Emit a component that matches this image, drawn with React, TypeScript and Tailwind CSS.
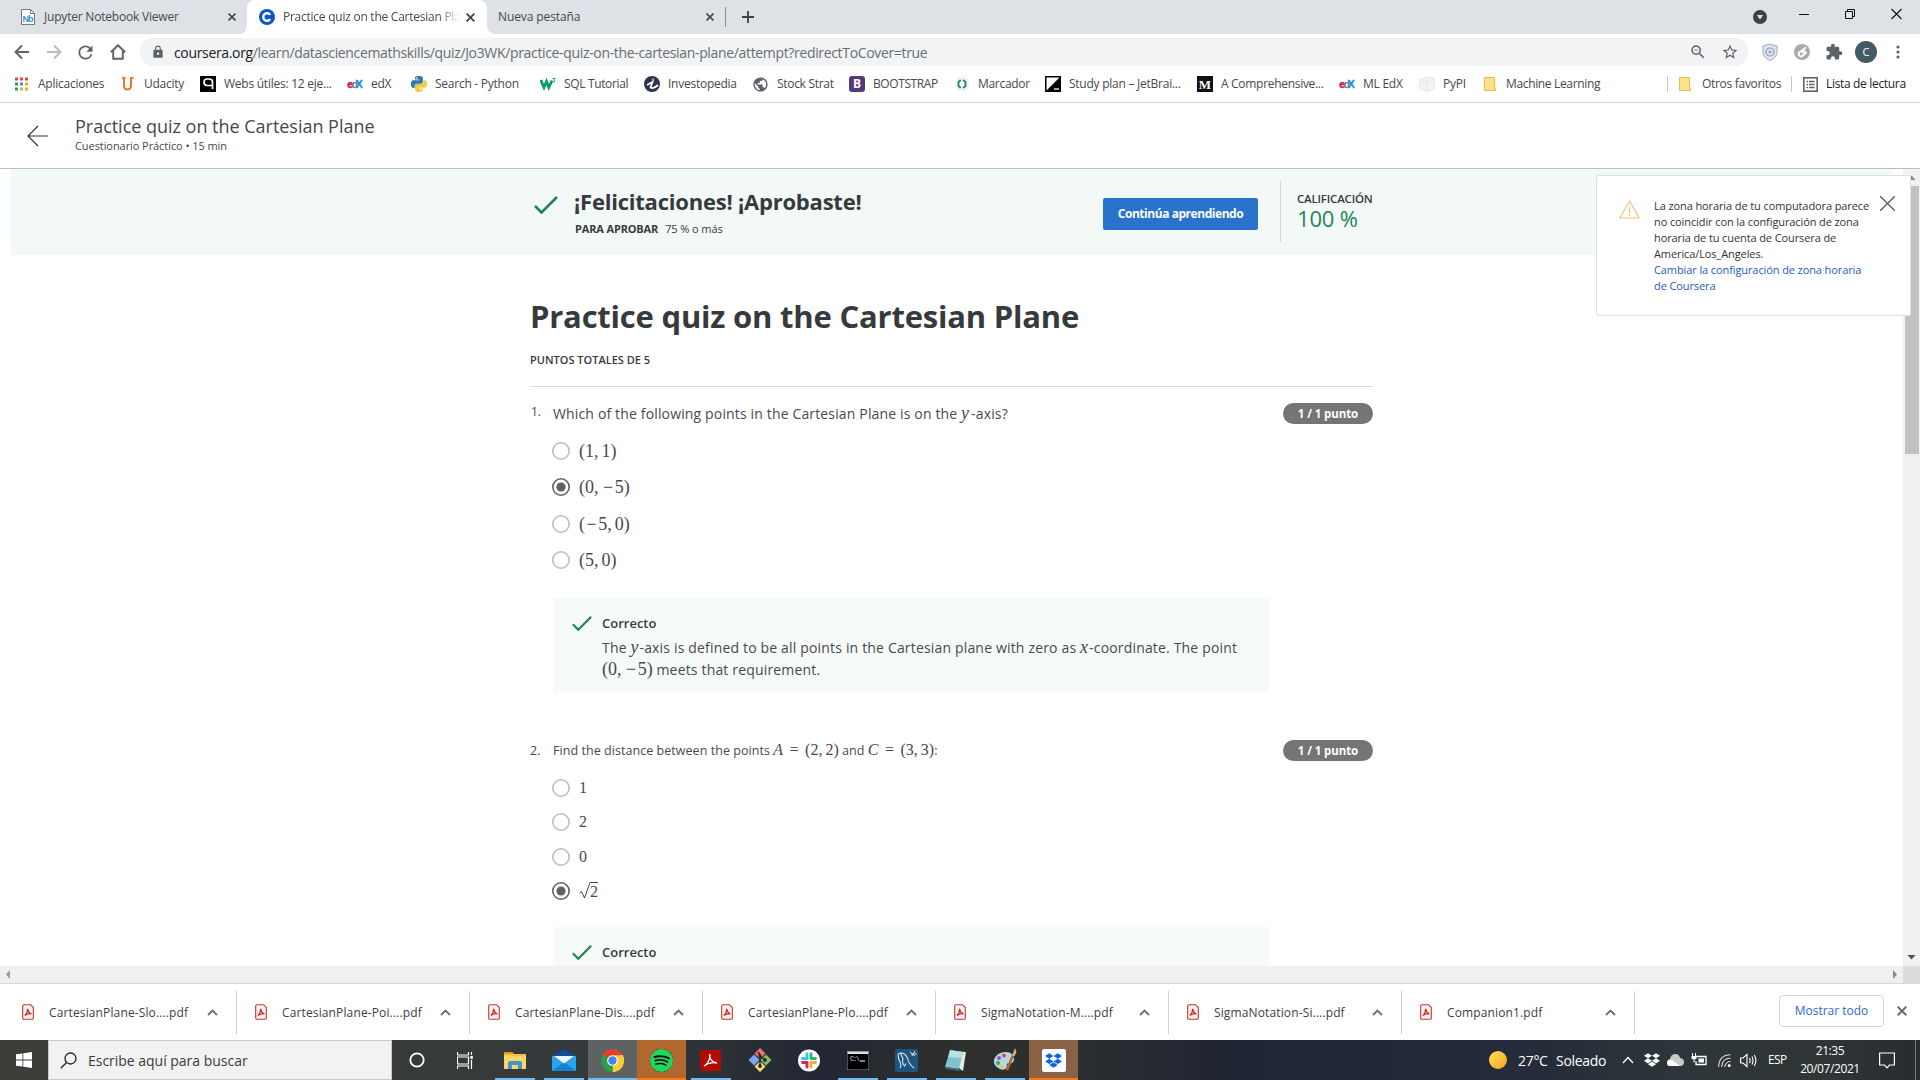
import React from "react";
import { SiPython, SiDropbox, SiSpotify } from "react-icons/si";
import { MdLock, MdExtension, MdStarBorder, MdZoomOut, MdPublic, MdRefresh } from "react-icons/md";

const ui = "font-['Open_Sans','Noto_Sans',sans-serif]";
const serif = "font-['Liberation_Serif',serif]";

/* ---------- browser chrome ---------- */

function Cross({ size = 8, w = 1.6, color = "#45494d" }: { size?: number; w?: number; color?: string }) {
  return (
    <svg width={size} height={size} viewBox="0 0 10 10" className="shrink-0">
      <path d="M0.7 0.7L9.3 9.3M9.3 0.7L0.7 9.3" stroke={color} strokeWidth={w * (10 / size)} fill="none" />
    </svg>
  );
}

function TabBar() {
  return (
    <div className="flex h-[34px] bg-[#dee1e6] text-[12px] text-[#45494d]">
      <div className="flex w-[247px] items-center pl-[21px] pr-[11px]">
        <svg width="14" height="16" viewBox="0 0 14 16">
          <path d="M1 .5h8.500L13.500 4.500v11H.5V.5z" fill="#fff" stroke="#777" />
          <path d="M9.500 .5v4h4" fill="none" stroke="#777" />
          <text x="1.500" y="13" fontSize="9" fontWeight="600" fill="#3c8dc9" fontFamily="Liberation Sans" textLength="11">Nb</text>
        </svg>
        <span className="ml-[9px] flex-1 whitespace-nowrap tracking-[-0.2px]">Jupyter Notebook Viewer</span>
        <Cross />
      </div>
      <div className="relative flex w-[240px] items-center rounded-t-[8px] bg-white pl-[12px] pr-[12px]">
        <svg width="8" height="8" className="absolute bottom-0 -left-2"><path d="M8 0V8H0A8 8 0 0 0 8 0z" fill="#fff" /></svg>
        <svg width="8" height="8" className="absolute bottom-0 -right-2"><path d="M0 0V8H8A8 8 0 0 1 0 0z" fill="#fff" /></svg>
        <svg width="16" height="16" viewBox="0 0 16 16">
          <circle cx="8" cy="8" r="8" fill="#0b56cf" />
          <path d="M11.200 10.100A3.800 3.800 0 1 1 11.200 5.900" fill="none" stroke="#fff" strokeWidth="2.400" />
        </svg>
        <span className="ml-[8px] w-[177px] overflow-hidden whitespace-nowrap tracking-[-0.25px] [mask-image:linear-gradient(90deg,#000_88%,transparent)]">Practice quiz on the Cartesian Plane</span>
        <span className="ml-auto flex"><Cross size={9} w={1.9} /></span>
      </div>
      <div className="flex w-[238px] items-center pl-[11px] pr-[11px]">
        <span className="flex-1 tracking-[-0.1px]">Nueva pestaña</span>
        <Cross />
      </div>
      <div className="flex items-center">
        <div className="h-[20px] w-px bg-[#8a8d91]" />
        <svg className="ml-[16px]" width="12" height="12"><path d="M6 0V12M0 6H12" stroke="#3c4043" strokeWidth="1.8" /></svg>
      </div>
      <div className="ml-auto flex pt-[6px] pr-[18px]">
        <svg width="14" height="14" className="mt-[4px] mr-[32px]" viewBox="0 0 14 14"><circle cx="7" cy="7" r="7" fill="#3c4043" /><path d="M3.800 5h6.400L7 9.400z" fill="#dee1e6" /></svg>
        <svg width="10" height="16" className="mr-[36px]"><path d="M0 8.500H10" stroke="#111" /></svg>
        <svg width="10" height="16" className="mr-[36px]"><path d="M.5 5.500h7v7h-7zM2.500 5.500v-2h7v7h-2" fill="none" stroke="#111" /></svg>
        <svg width="11" height="16"><path d="M.5 3L10.500 13M10.500 3L.5 13" stroke="#111" strokeWidth="1.1" /></svg>
      </div>
    </div>
  );
}

function Toolbar() {
  return (
    <div className="flex h-[36px] items-center bg-white pl-[14px] text-[#5f6368]">
      <svg width="16" height="16" viewBox="0 0 16 16"><path d="M15 8H2M8 1.500L1.500 8L8 14.500" fill="none" stroke="#5f6368" strokeWidth="1.900" /></svg>
      <svg className="ml-[16px]" width="16" height="16" viewBox="0 0 16 16"><path d="M1 8H14M8 1.500L14.500 8L8 14.500" fill="none" stroke="#babcbe" strokeWidth="1.900" /></svg>
      <MdRefresh className="ml-[13px]" size={21} color="#5f6368" />
      <svg className="ml-[14px]" width="16" height="16" viewBox="0 0 16 16"><path d="M.8 8.200L8 1.200L15.200 8.200M3.200 6.500V14.800H12.800V6.500" fill="none" stroke="#5f6368" strokeWidth="1.900" /></svg>
      <div className="ml-[14px] flex h-[28px] w-[1608px] items-center rounded-full bg-[#f1f3f4] pl-[11px] pr-[9px]">
        <MdLock size={14} color="#5f6368" />
        <span className="ml-[9px] flex-1 text-[14px] tracking-[-0.34px] text-[#6a6e72]"><span className="text-[#202124]">coursera.org</span>/learn/datasciencemathskills/quiz/Jo3WK/practice-quiz-on-the-cartesian-plane/attempt?redirectToCover=true</span>
        <MdZoomOut size={18} color="#5f6368" />
        <MdStarBorder className="ml-[14px]" size={18} color="#5f6368" />
      </div>
      <svg className="ml-[14px]" width="16" height="18" viewBox="0 0 16 18"><path d="M8 1L15 3V9C15 13 12 16 8 17.500C4 16 1 13 1 9V3z" fill="#dfe3ec" stroke="#a3abba" /><circle cx="8" cy="9" r="4" fill="none" stroke="#8f9fc2" strokeWidth="1.200" /><circle cx="8" cy="9" r="1.800" fill="#a9b6d2" /></svg>
      <svg className="ml-[16px]" width="16" height="16" viewBox="0 0 16 16"><circle cx="8" cy="8" r="8" fill="#a9a9a9" /><path d="M12 3.500L5.500 8.200A2.300 2.300 0 0 0 8.500 11.800L12 8.800L10 6.800L8 9" fill="none" stroke="#fff" strokeWidth="1.900" /></svg>
      <MdExtension className="ml-[15px]" size={18} color="#5f6368" />
      <span className="ml-[12px] flex h-[22px] w-[22px] items-center justify-center rounded-full bg-[#455a64] text-[11px] text-white">C</span>
      <svg className="ml-[19px]" width="4" height="16"><circle cx="2" cy="3" r="1.600" fill="#5f6368" /><circle cx="2" cy="8" r="1.600" fill="#5f6368" /><circle cx="2" cy="13" r="1.600" fill="#5f6368" /></svg>
    </div>
  );
}

const Folder = () => (
  <svg width="16" height="16" viewBox="0 0 16 16"><path d="M2.500 1.500h10v9.500l1 1v2.500h-11z" fill="#fde28a" stroke="#e3be4e" /></svg>
);
const Edx = () => (
  <svg width="16" height="16" viewBox="0 0 16 16">
    <text x="0" y="12" fontSize="11" fontWeight="700" fill="#b2246b" stroke="#b2246b" strokeWidth=".4" fontFamily="Liberation Sans">e</text>
    <text x="4.500" y="12" fontSize="11" fontWeight="700" fill="#7d6c80" fontFamily="Liberation Sans">d</text>
    <text x="8.500" y="12" fontSize="11" fontWeight="700" fill="#1f92dc" stroke="#1f92dc" strokeWidth=".4" fontFamily="Liberation Sans">X</text>
  </svg>
);

const bookmarks: { label: string; w: string; t: string; icon: React.ReactNode }[] = [
  {
    label: "Aplicaciones", w: "w-[106px]", t: "tracking-[-0.25px]",
    icon: (
      <svg width="16" height="16" viewBox="0 0 16 16">
        {["#d94c40", "#d94c40", "#d94c40", "#2e9b5b", "#4285d6", "#e8ab2e", "#2e9b5b", "#e8ab2e", "#e8ab2e"].map((c, i) => (
          <rect key={i} x={1 + (i % 3) * 5} y={1.5 + Math.floor(i / 3) * 5} width="3" height="3" fill={c} />
        ))}
      </svg>
    ),
  },
  { label: "Udacity", w: "w-[80px]", t: "tracking-[-0.25px]", icon: <svg width="16" height="16" viewBox="0 0 16 16"><path d="M2 2H5.500M4 2V9.500Q4 13.500 7.500 13.500Q11 13.500 11 9.500V2H13.500" fill="none" stroke="#e47a2e" strokeWidth="2" /></svg> },
  { label: "Webs útiles: 12 eje...", w: "w-[147px]", t: "tracking-[-0.25px]", icon: <svg width="16" height="16" viewBox="0 0 16 16"><rect width="16" height="16" fill="#000" /><path d="M12.500 13V6Q12.500 3 9 3H7Q4 3 4 6Q4 9.500 7 9.500H12.500" fill="none" stroke="#fff" strokeWidth="1.700" /></svg> },
  { label: "edX", w: "w-[64px]", t: "tracking-[-0.25px]", icon: <Edx /> },
  {
    label: "Search - Python", w: "w-[129px]", t: "tracking-[-0.25px]",
    icon: (
      <span className="relative block h-4 w-4">
        <SiPython size={16} color="#3a74a6" className="absolute [clip-path:polygon(0_0,76%_0,76%_50%,34%_56%,26%_80%,0_80%)]" />
        <SiPython size={16} color="#f8cd3c" className="absolute [clip-path:polygon(78%_20%,100%_20%,100%_100%,26%_100%,26%_60%,36%_54%,76%_48%)]" />
      </span>
    ),
  },
  { label: "SQL Tutorial", w: "w-[104px]", t: "tracking-[-0.35px]", icon: <svg width="16" height="16" viewBox="0 0 16 16"><path d="M.8 4L4 11.500L6.500 5.500L8.800 11.500L12 4.500" fill="none" stroke="#0d9b63" strokeWidth="2.800" /><path d="M12.500 2.500h2.500l-1.300 1.700q1.500 .2 1 1.600q-.9 .9-2.200 .1" fill="none" stroke="#0d9b63" strokeWidth=".9" /></svg> },
  { label: "Investopedia", w: "w-[108px]", t: "tracking-[-0.25px]", icon: <svg width="16" height="16" viewBox="0 0 16 16"><circle cx="8" cy="8" r="8" fill="#2b3150" /><circle cx="9" cy="3.500" r="1.400" fill="#e2704f" /><path d="M3 9L8.500 6L6.500 11.500Q9.500 13.500 14 9" fill="none" stroke="#fff" strokeWidth="1.900" /></svg> },
  { label: "Stock Strat", w: "w-[97px]", t: "tracking-[-0.3px]", icon: <MdPublic size={17} color="#5f6368" /> },
  { label: "BOOTSTRAP", w: "w-[105px]", t: "tracking-[-0.4px]", icon: <span className="flex h-4 w-4 items-center justify-center rounded-[3px] bg-[#533b78] text-[12px] font-bold leading-none text-white">B</span> },
  { label: "Marcador", w: "w-[91px]", t: "tracking-[-0.3px]", icon: <svg width="16" height="16" viewBox="0 0 16 16"><circle cx="8" cy="8" r="7.500" fill="#f1f4f4" /><path d="M6.800 4L4.500 6V10L6.800 12M9.200 4L11.500 6V10L9.200 12" fill="none" stroke="#33807f" strokeWidth="1.900" /></svg> },
  { label: "Study plan – JetBrai...", w: "w-[152px]", t: "tracking-[-0.25px]", icon: <svg width="16" height="16" viewBox="0 0 16 16"><rect x=".75" y=".75" width="14.500" height="14.500" fill="#fff" stroke="#000" strokeWidth="1.500" /><path d="M16 0V16H0z" fill="#000" /><path d="M9 13H14" stroke="#fff" strokeWidth="1.300" /></svg> },
  { label: "A Comprehensive...", w: "w-[142px]", t: "tracking-[-0.3px]", icon: <span className="flex h-4 w-4 items-center justify-center bg-[#111] font-['Liberation_Serif',serif] text-[13px] font-bold leading-none text-white">M</span> },
  { label: "ML EdX", w: "w-[80px]", t: "tracking-[-0.25px]", icon: <Edx /> },
  { label: "PyPI", w: "w-[63px]", t: "tracking-[-0.25px]", icon: <svg width="16" height="16" viewBox="0 0 16 16"><path d="M.5 3.500L8 .8L15.500 3V13L8 15.500L.5 12.500z" fill="#f3f3f1" stroke="#e2e2e0" strokeWidth=".8" /><path d="M.5 3.500L8 5.800L15.500 3M8 5.800V15.500" fill="none" stroke="#e0e0de" strokeWidth=".8" /></svg> },
  { label: "Machine Learning", w: "w-[185px]", t: "tracking-[-0.35px]", icon: <Folder /> },
];

function BookmarkBar() {
  return (
    <div className="flex h-[33px] items-center border-b border-[#d3d5d8] bg-white pb-[4px] pl-[14px] text-[12px] text-[#45494d]">
      {bookmarks.map((b) => (
        <div key={b.label} className={"flex shrink-0 items-center gap-[8px] " + b.w}>
          {b.icon}
          <span className={"whitespace-nowrap " + b.t}>{b.label}</span>
        </div>
      ))}
      <div className="h-[16px] w-px bg-[#c4c7ca]" />
      <div className="ml-[9px] flex w-[114px] items-center gap-[9px]"><Folder /><span className="whitespace-nowrap tracking-[-0.3px]">Otros favoritos</span></div>
      <div className="h-[16px] w-px bg-[#c4c7ca]" />
      <svg className="ml-[11px]" width="15" height="15" viewBox="0 0 15 15"><rect x=".8" y=".8" width="13.400" height="13.400" fill="none" stroke="#5f6368" strokeWidth="1.600" /><path d="M3.500 4.500h1.500M3.500 7.500h1.500M3.500 10.500h1.500M6 4.500h5.500M6 7.500h5.500M6 10.500h5.500" stroke="#5f6368" strokeWidth="1.400" /></svg>
      <span className="ml-[8px] whitespace-nowrap tracking-[-0.33px] text-[#202124]">Lista de lectura</span>
    </div>
  );
}

/* ---------- course page ---------- */

function PageHeader() {
  return (
    <header className="flex h-[66px] items-start border-b border-[#bcbfbf] bg-white pl-[27px] text-[#45484a]">
      <svg className="mt-[22px]" width="22" height="22" viewBox="0 0 22 22"><path d="M21 11H1M11 1L1 11L11 21" fill="none" stroke="#333" strokeWidth="1.200" /></svg>
      <div className="ml-[26px] mt-[10px]">
        <div className="text-[18px] leading-[26px] tracking-[-0.02px]">Practice quiz on the Cartesian Plane</div>
        <div className="text-[11px] leading-[13px] tracking-[-0.07px]">Cuestionario Práctico • 15 min</div>
      </div>
    </header>
  );
}

function Check({ w, h, className = "" }: { w: number; h: number; className?: string }) {
  return (
    <svg width={w} height={h} viewBox="0 0 24 18" preserveAspectRatio="none" className={"shrink-0 " + className}>
      <path d="M1 10L7.500 16.500L23 1" fill="none" stroke="#1f8354" strokeWidth="2.600" />
    </svg>
  );
}

function ResultBanner() {
  return (
    <div className="ml-[11px] flex h-[86px] w-[1881px] bg-[#f3f9f7] pl-[523px]">
      <Check w={24} h={18} className="mt-[27px]" />
      <div className="ml-[16px] w-[529px] pt-[16px] text-[#373a3c]">
        <div className="text-[22px] font-bold leading-[32px] tracking-[-0.22px]">¡Felicitaciones! ¡Aprobaste!</div>
        <div className="ml-[1px] mt-[4px] flex gap-[7px] text-[11px] leading-[16px]"><span className="font-bold tracking-[-0.15px]">PARA APROBAR</span><span className="tracking-[-0.1px]">75 % o más</span></div>
      </div>
      <div className="mt-[29px] flex h-[32px] w-[155px] items-center justify-center rounded-[2px] bg-[#2a73cc] text-[12px] font-bold tracking-[-0.45px] text-white">Continúa aprendiendo</div>
      <div className="ml-[22px] mt-[12px] h-[61px] w-px bg-[#d5dad8]" />
      <div className="ml-[16px] mt-[22px]">
        <div className="text-[11.5px] font-semibold leading-[16px] tracking-[-0.2px] text-[#373a3c]">CALIFICACIÓN</div>
        <div className="mt-[-1px] text-[22px] leading-[24px] tracking-[-0.2px] text-[#25845a]">100 %</div>
      </div>
    </div>
  );
}

function M({ children, i = false, s = "text-[18px]" }: { children: React.ReactNode; i?: boolean; s?: string }) {
  return <span className={serif + " leading-none tracking-normal text-[#484848] " + s + (i ? " italic" : "")}>{children}</span>;
}

const Minus = () => <span className="mx-[1.5px]">−</span>;

function Radio({ on }: { on?: boolean }) {
  return (
    <svg width="18" height="18" viewBox="0 0 18 18" className="shrink-0">
      <circle cx="9" cy="9" r="8.200" fill="#fff" stroke={on ? "#616161" : "#bdbdbd"} strokeWidth="1.600" />
      {on && <circle cx="9" cy="9" r="4.600" fill="#616161" />}
    </svg>
  );
}

function Option({ on, h, children }: { on?: boolean; h: string; children: React.ReactNode }) {
  return (
    <div className={"flex items-center gap-[9px] text-[#444] " + h}>
      <Radio on={on} />
      {children}
    </div>
  );
}

function Badge() {
  return <div className="flex h-[21px] w-[90px] shrink-0 items-center justify-center rounded-full bg-[#757575] text-[11.5px] font-bold tracking-[-0.1px] text-white">1 / 1 punto</div>;
}

function Quiz() {
  return (
    <div className="ml-[530px] w-[843px] text-[#4a4a4a]">
      <h1 className="mt-[39px] text-[31px] font-bold leading-[44px] tracking-[-0.21px] text-[#373a3c]">Practice quiz on the Cartesian Plane</h1>
      <div className="mt-[14px] text-[11px] font-semibold leading-[16px] text-[#373a3c]">PUNTOS TOTALES DE 5</div>
      <div className="mt-[18px] h-px bg-[#d9dada]" />

      <div className="mt-[16px] flex h-[21px]">
        <span className="w-[23px] pl-px text-[12px] leading-[18px]">1.</span>
        <span className="flex-1 text-[14px] leading-[22px] tracking-[0.15px]">Which of the following points in the Cartesian Plane is on the <span className="mr-[2px]"><M i s="text-[18px]">y</M></span>-axis?</span>
        <Badge />
      </div>
      <div className="ml-[22px] mt-[9px]">
        <Option h="h-[36.3px]"><M>(1,<span className="ml-[3px]">1)</span></M></Option>
        <Option h="h-[36.3px]" on><M>(0,<span className="ml-[3px]"><Minus />5)</span></M></Option>
        <Option h="h-[36.4px]"><M>(<Minus />5,<span className="ml-[3px]">0)</span></M></Option>
        <Option h="h-[36px]"><M>(5,<span className="ml-[3px]">0)</span></M></Option>
      </div>
      <div className="ml-[23px] mt-[20px] h-[94px] w-[716px] bg-[#f6faf9] pl-[19px] pt-[16px]">
        <div className="flex h-[19px] items-center gap-[10px]"><Check w={20} h={15} /><span className="text-[13px] font-semibold text-[#373a3c]">Correcto</span></div>
        <div className="ml-[30px] mt-[4px] text-[14px] leading-[22px] tracking-[0.17px]">
          <div className="h-[22px] whitespace-nowrap">The <span className="mr-px"><M i s="text-[18px]">y</M></span>-axis is defined to be all points in the Cartesian plane with zero as <span className="mr-px"><M i s="text-[18px]">x</M></span>-coordinate. The point</div>
          <div className="h-[22px] whitespace-nowrap"><M>(0,<span className="ml-[3px]"><Minus />5)</span></M> meets that requirement.</div>
        </div>
      </div>

      <div className="mt-[48px] flex h-[21px]">
        <span className="w-[23px] text-[12.5px] leading-[21px]">2.</span>
        <span className="flex-1 whitespace-nowrap text-[12.5px] leading-[22px] tracking-[0.05px]">Find the distance between the points <M i s="text-[16px]">A</M><M s="text-[16px]"><span className="mx-[6.5px]">=</span>(2,<span className="ml-[3px]">2)</span></M> and <M i s="text-[16px]">C</M><M s="text-[16px]"><span className="mx-[6.5px]">=</span>(3,<span className="ml-[3px]">3)</span></M>:</span>
        <Badge />
      </div>
      <div className="ml-[22px] mt-[10px]">
        <Option h="h-[34.3px]"><M s="text-[16px]">1</M></Option>
        <Option h="h-[34.3px]"><M s="text-[16px]">2</M></Option>
        <Option h="h-[34.3px]"><M s="text-[16px]">0</M></Option>
        <Option h="h-[34.1px]" on>
          <span className="flex items-start">
            <svg width="11" height="17" viewBox="0 0 11 17"><path d="M.5 11L2.500 9.500L5.500 16L11 .5" fill="none" stroke="#444" /></svg>
            <span className="flex border-t border-[#444] pt-[1px]"><M s="text-[16px]">2</M></span>
          </span>
        </Option>
      </div>
      <div className="ml-[23px] mt-[19px] h-[94px] w-[716px] bg-[#f6faf9] pl-[19px] pt-[16px]">
        <div className="flex h-[19px] items-center gap-[10px]"><Check w={20} h={15} /><span className="text-[13px] font-semibold text-[#373a3c]">Correcto</span></div>
      </div>
    </div>
  );
}

function Notice() {
  return (
    <div className="absolute left-[1596px] top-[6px] flex h-[141px] w-[315px] rounded-[2px] border border-[#dfe1e1] bg-white">
      <svg className="ml-[22px] mt-[24px]" width="21" height="19" viewBox="0 0 21 19"><path d="M10.500 1L20.200 18H.8z" fill="none" stroke="#f0c070" strokeWidth="1.100" /><path d="M10.500 7V13M10.500 14.500V16" stroke="#f0c070" strokeWidth="1.200" /></svg>
      <div className="ml-[14px] mt-[22px] whitespace-nowrap text-[11px] leading-[16px] tracking-[-0.1px] text-[#333]">
        La zona horaria de tu computadora parece<br />no coincidir con la configuración de zona<br />horaria de tu cuenta de Coursera de<br />America/Los_Angeles.<br />
        <span className="text-[#1f5bc0]">Cambiar la configuración de zona horaria<br />de Coursera</span>
      </div>
      <div className="absolute left-[282px] top-[19px]"><Cross size={17} w={1.3} color="#555" /></div>
    </div>
  );
}

function Viewport() {
  return (
    <div className="flex h-[797px]">
      <main className="relative h-full w-[1903px] overflow-hidden bg-white">
        <ResultBanner />
        <Quiz />
      </main>
      <div className="flex h-full w-[17px] flex-col items-center bg-[#f1f1f1]">
        <svg width="17" height="17"><path d="M4.500 11L8.500 6.500L12.500 11z" fill="#8a8a8a" /></svg>
        <div className="h-[268px] w-[14px] bg-[#c1c1c1]" />
        <svg className="mt-auto" width="17" height="17"><path d="M4.500 6L8.500 10.500L12.500 6z" fill="#505050" /></svg>
      </div>
    </div>
  );
}

/* ---------- downloads shelf ---------- */

const files = ["CartesianPlane-Slo....pdf", "CartesianPlane-Poi....pdf", "CartesianPlane-Dis....pdf", "CartesianPlane-Plo....pdf", "SigmaNotation-M....pdf", "SigmaNotation-Si....pdf", "Companion1.pdf"];

function Downloads() {
  return (
    <div className="flex h-[57px] items-center border-t border-[#d6d8da] bg-white text-[12px] text-[#3c4043]">
      {files.map((f, i) => (
        <div key={f} className={"flex h-[43px] items-center border-r border-[#cdd0d3] pr-[18px] " + (i === 0 ? "w-[237px] pl-[22px]" : "w-[233px] pl-[18px]")}>
          <svg width="12" height="16" viewBox="0 0 12 16"><path d="M.7 2Q.7 .7 2 .7H8.500L11.300 3.500V14Q11.300 15.300 10 15.300H2Q.7 15.300 .7 14z" fill="#fdf3f2" stroke="#c4352c" strokeWidth="1.100" /><path d="M2.800 11.500Q5.500 9.500 5.700 4.800Q6.500 9 9.500 9.800Q6 8.800 2.800 11.500z" fill="none" stroke="#c8281e" strokeWidth="1.200" /></svg>
          <span className="ml-[15px] mt-[2px] flex-1 whitespace-nowrap tracking-[0.13px]">{f}</span>
          <svg width="11" height="7"><path d="M1 6L5.500 1.500L10 6" fill="none" stroke="#6b6f73" strokeWidth="1.800" /></svg>
        </div>
      ))}
      <div className="ml-[144px] mt-[-2px] flex h-[32px] w-[105px] items-center justify-center rounded-[4px] border border-[#d5d8dc] text-[12px] font-medium text-[#3268c8]">Mostrar todo</div>
      <div className="ml-[13px] mt-[-2px] flex"><Cross size={10} w={2} color="#6b6f73" /></div>
    </div>
  );
}

/* ---------- Windows taskbar ---------- */

function TaskCell({ children, bg = "", line = "" }: { children: React.ReactNode; bg?: string; line?: string }) {
  return (
    <div className={"relative flex h-[40px] w-[49px] items-center justify-center " + bg}>
      {children}
      {line && <div className={"absolute bottom-0 h-[2px] " + line} />}
    </div>
  );
}

const run = "w-[40px] bg-[#76b9ed]";

function Taskbar() {
  return (
    <div className="flex h-[40px] bg-[linear-gradient(90deg,#3f3d38_0%,#383a3a_20%,#33393b_31%,#2c3236_37%,#222634_43%,#2e302c_50%,#2b2f30_56%,#202532_63%,#22283a_76%,#2d3639_88%,#303536_95%,#262c30_100%)] text-white">
      <div className="flex w-[48px] items-center justify-center">
        <svg width="16" height="16" viewBox="0 0 16 16" fill="#fff"><path d="M0 2.300L6.500 1.400V7.600H0zM7.300 1.300L16 0V7.600H7.300zM0 8.400H6.500V14.600L0 13.700zM7.300 8.400H16V16L7.300 14.700z" /></svg>
      </div>
      <div className="flex w-[344px] items-center border border-[#c9c9c9] bg-[#f2f2f2] pl-[11px]">
        <svg width="17" height="17" viewBox="0 0 17 17"><circle cx="10.500" cy="6.500" r="5.500" fill="none" stroke="#222" strokeWidth="1.300" /><path d="M6.500 10.500L.8 16.200" stroke="#222" strokeWidth="1.300" /></svg>
        <span className="ml-[11px] text-[14px] text-[#3b3b3b] tracking-[-0.02px]">Escribe aquí para buscar</span>
      </div>
      <TaskCell><svg width="16" height="16"><circle cx="8" cy="8" r="6.700" fill="none" stroke="#fff" strokeWidth="1.800" /></svg></TaskCell>
      <TaskCell>
        <svg width="17" height="17" viewBox="0 0 17 17"><path d="M.5 0V3H11.500V0M.5 17V14H11.500V17M.5 5H11.500V12H.5zM14.500 0V3M14.500 8V17" fill="none" stroke="#fff" strokeWidth="1.200" /><rect x="13.300" y="4" width="2.500" height="3" fill="#fff" /></svg>
      </TaskCell>
      <TaskCell line={run}>
        <svg width="22" height="19" viewBox="0 0 22 19"><path d="M0 1H8L10 3H22V18H0z" fill="#f6c243" /><path d="M0 1H8L9.500 3H0z" fill="#d99a1e" /><path d="M0 5H22V18H0z" fill="#fbd566" /><path d="M4 18V12Q4 10 6 10H16Q18 10 18 12V18H14V14H8V18z" fill="#4296d2" /></svg>
      </TaskCell>
      <TaskCell line={run}>
        <svg width="24" height="22" viewBox="0 0 24 22"><path d="M0 7L12 0L24 7V9H0z" fill="#0f4f94" /><path d="M0 7H24V22H0z" fill="#2aa5ea" /><path d="M0 22L12 13L24 22z" fill="#1484d2" /><path d="M2 7H22L12 14.500z" fill="#eef6fc" /></svg>
      </TaskCell>
      <TaskCell bg="bg-[#5d6263]" line="w-full bg-[#76b9ed]">
        <svg width="23" height="23" viewBox="0 0 24 24">
          <path d="M12 12L1.610 6A12 12 0 0 1 22.390 6z" fill="#e3402f" />
          <path d="M12 12L22.390 6A12 12 0 0 1 12 24z" fill="#fbcc34" />
          <path d="M12 12V24A12 12 0 0 1 1.610 6z" fill="#2c9f4b" />
          <path d="M12 6.500H22.700A12 12 0 0 1 12 24L17 14z" fill="#fbcc34" />
          <circle cx="12" cy="12" r="5.600" fill="#fff" /><circle cx="12" cy="12" r="4.400" fill="#4385f0" />
        </svg>
      </TaskCell>
      <TaskCell bg="bg-[#b0682e]" line="w-full bg-[#f57a1c]"><span className="flex rounded-full bg-[#101010]"><SiSpotify size={23} color="#1fd65f" /></span></TaskCell>
      <TaskCell line={run}>
        <span className="flex h-[21px] w-[21px] items-center justify-center rounded-[3px] bg-[#b30b00]">
          <svg width="15" height="15" viewBox="0 0 15 15"><path d="M1 13Q6.500 10 7 2Q7 1 6.500 2Q7 9 14 10Q7 8.500 1 13z" fill="none" stroke="#fff" strokeWidth="1.300" /></svg>
        </span>
      </TaskCell>
      <TaskCell>
        <svg width="24" height="24" viewBox="0 0 24 24"><path d="M12 0L17.500 5.500L12 11L6.500 5.500z" fill="#f0706a" /><path d="M6 6.500L11.500 12L6 17.500L.5 12z" fill="#7aa7f5" /><path d="M18 6.500L23.500 12L18 17.500L12.500 12z" fill="#83c35d" /><path d="M12 13L17.500 18.500L12 24L6.500 18.500z" fill="#f8dc72" /><path d="M10 4L12 7V18M12 8L17 12" fill="none" stroke="#2b2b2b" strokeWidth="1.500" /><circle cx="12" cy="18" r="1.900" fill="#2b2b2b" /><circle cx="12" cy="8" r="1.700" fill="#2b2b2b" /><circle cx="17" cy="12" r="1.900" fill="#2b2b2b" /></svg>
      </TaskCell>
      <TaskCell>
        <svg width="22" height="23" viewBox="0 0 22 22"><circle cx="11" cy="11" r="11" fill="#fff" /><g strokeWidth="2.900" strokeLinecap="round"><path d="M9 4.500V9" stroke="#36c5f0" /><path d="M4.500 9H9" stroke="#36c5f0" /><path d="M13 4.500V9M13 9H17.500" stroke="#2eb67d" /><path d="M13 13H17.500M13 13V17.500" stroke="#ecb22e" /><path d="M4.500 13H9M9 13V17.500" stroke="#e01e5a" /></g></svg>
      </TaskCell>
      <TaskCell line={run}>
        <svg width="22" height="19" viewBox="0 0 22 19"><rect width="22" height="19" fill="#000" stroke="#999" /><rect x=".5" y=".5" width="21" height="2.500" fill="#ddd" /><text x="3" y="10" fontSize="7" fill="#ddd" fontFamily="Liberation Mono" textLength="10">C:\</text><path d="M13 10H18" stroke="#fff" /></svg>
      </TaskCell>
      <TaskCell line={run}>
        <svg width="23" height="23" viewBox="0 0 23 23"><rect width="23" height="23" rx="2" fill="#1e5580" /><path d="M5 19Q7 16 4.500 12Q1.500 4 5 4Q10 3.500 12.500 9Q13.500 15 19 19M5 4Q7 7 8 10Q6.500 13 9.500 17L11 14.500" fill="none" stroke="#d9e6ef" strokeWidth="1.100" /><path d="M15 3L20 7M20 2L17 7M16 5H22" stroke="#cddce8" /></svg>
      </TaskCell>
      <TaskCell line={run}>
        <svg width="23" height="23" viewBox="0 0 23 23"><path d="M6 2L22 3L19 22L16 20z" fill="#e8e8e2" /><path d="M6 1L19 3L15 20L1 18z" fill="#7fc4cf" /><path d="M6 1L19 3L17.500 9L4.500 8z" fill="#b8e0e5" /><path d="M1 18L15 20L16 22L2 20z" fill="#3e6f78" /></svg>
      </TaskCell>
      <TaskCell line={run}>
        <svg width="24" height="24" viewBox="0 0 24 24"><path d="M11 4Q20 3 21 11Q21 16 16 15Q13 15 14 19Q12 23 7 21Q0 18 1 12Q3 5 11 4z" fill="#b4d6eb" /><circle cx="6" cy="10" r="2" fill="#8a5bb5" /><circle cx="11" cy="7.500" r="2" fill="#d94f3c" /><circle cx="5" cy="15" r="2" fill="#3fa855" /><circle cx="9" cy="18.500" r="1.800" fill="#f0c73a" /><path d="M14 22L20 7" stroke="#b4682a" strokeWidth="2.600" /><path d="M19 8L22 0L23.500 4L21.500 8z" fill="#ddb483" /></svg>
      </TaskCell>
      <TaskCell bg="bg-[#8a6144]" line="w-full bg-[#f57a1c]">
        <span className="flex h-[23px] w-[24px] items-center justify-center rounded-[2px] bg-white"><SiDropbox size={17} color="#0a63f5" /></span>
      </TaskCell>

      <div className="ml-auto flex items-center text-[14px]">
        <span className="h-[18px] w-[18px] rounded-full bg-[linear-gradient(135deg,#ffe45e,#f6a01c)]" />
        <span className="ml-[11px] w-[38px] whitespace-nowrap tracking-[-0.3px]">27°C</span>
        <span className="w-[66px] tracking-[-0.3px]">Soleado</span>
        <svg width="12" height="8"><path d="M1 7L6 1.500L11 7" fill="none" stroke="#fff" strokeWidth="1.300" /></svg>
        <SiDropbox className="ml-[10px]" size={16} />
        <svg className="ml-[7px]" width="17" height="12" viewBox="0 0 17 12"><path d="M4 12Q0 12 0 8.500Q0 5.500 3 5Q4 0 8.500 0Q12 0 13 4Q17 4.500 17 8Q17 12 13 12z" fill="#c9c9c9" /><path d="M3 12Q0 12 0 8.500Q1 5 5 6L13 12z" fill="#fff" /></svg>
        <svg className="ml-[7px]" width="16" height="14" viewBox="0 0 16 14"><path d="M5 3.500H15V11.500H5V8" fill="none" stroke="#fff" strokeWidth="1.300" /><rect x="7.500" y="5.500" width="5.500" height="4" fill="#fff" /><path d="M1.500 0V3M4.500 0V3M3 7V9.500" stroke="#fff" /><path d="M.5 3H5.500V5.500Q3 8 .5 5.500z" fill="#fff" /></svg>
        <svg className="ml-[11px]" width="13" height="13" viewBox="0 0 13 13"><path d="M.6 13Q1 1 12.500 .8M3.600 13Q4 4.500 12.500 4M6.600 13Q7.500 8 12.500 7.300" fill="none" stroke="#ddd" strokeWidth="1.100" /><circle cx="11.200" cy="11.500" r="1.500" fill="#fff" /></svg>
        <svg className="ml-[9px]" width="17" height="15" viewBox="0 0 17 15"><path d="M.6 5H3L7 1.500V13.500L3 10H.6z" fill="none" stroke="#fff" strokeWidth="1.100" /><path d="M9.500 5Q10.800 7.500 9.500 10M12 3.500Q14 7.500 12 11.500M14.300 2Q17.500 7.500 14.300 13" fill="none" stroke="#fff" strokeWidth="1.100" /></svg>
        <span className="ml-[11px] w-[31px] text-[12px] tracking-[-0.6px]">ESP</span>
        <div className="w-[62px] text-center text-[12px] leading-[18px] tracking-[-0.4px]">21:35<br />20/07/2021</div>
        <svg className="ml-[18px]" width="16" height="17" viewBox="0 0 16 17"><path d="M.6 1H15.400V13H10.500L8 15.800L5.500 13H.6z" fill="none" stroke="#fff" strokeWidth="1.200" /></svg>
        <div className="ml-[20px] mr-[4px] h-[40px] w-px bg-[#777b7c]" />
      </div>
    </div>
  );
}

export default function App() {
  return (
    <div className={"flex h-[1080px] w-[1920px] flex-col overflow-hidden bg-white " + ui}>
      <TabBar />
      <Toolbar />
      <BookmarkBar />
      <PageHeader />
      <div className="relative">
        <Viewport />
        <Notice />
      </div>
      <div className="flex h-[17px] items-center bg-[#f0f0f0] pl-[5px]">
        <svg width="6" height="9"><path d="M5 0V9L1 4.500z" fill="#9a9a9a" /></svg>
        <svg className="ml-auto mr-[5px]" width="6" height="9"><path d="M1 0V9L5 4.500z" fill="#8a8a8a" /></svg>
        <div className="h-full w-[17px] bg-[#dcdcdc]" />
      </div>
      <Downloads />
      <Taskbar />
    </div>
  );
}
